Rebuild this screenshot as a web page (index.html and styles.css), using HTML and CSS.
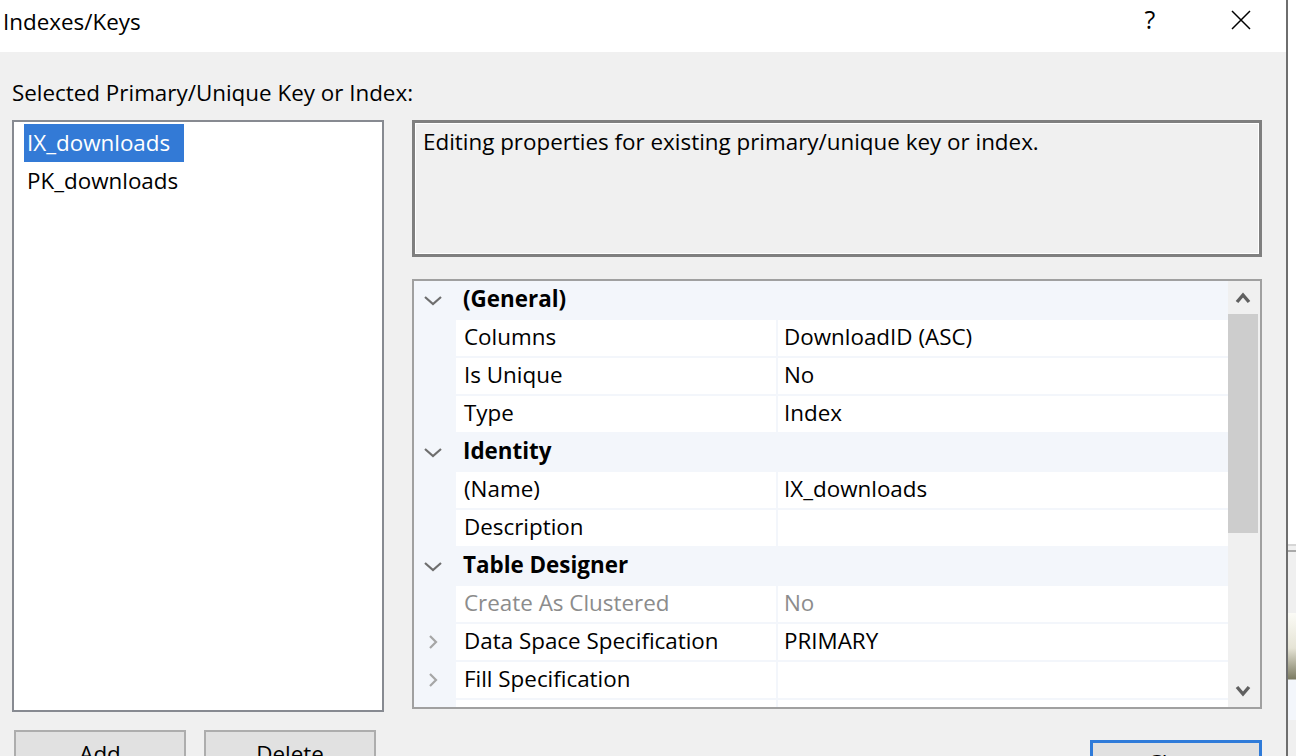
FILE: index.html
```html
<!DOCTYPE html>
<html>
<head>
<meta charset="utf-8">
<title>Indexes/Keys</title>
<link rel="stylesheet" href="styles.css">
</head>
<body>
<div class="screen">
  <div class="dialog">
    <div class="titlebar">
      <div class="title">Indexes/Keys</div>
      <div class="cap-help">?</div>
      <div class="cap-close">
        <svg width="20" height="20" viewBox="0 0 20 20"><path d="M1 1 L19 19 M19 1 L1 19" stroke="#000" stroke-width="1.5" fill="none"/></svg>
      </div>
    </div>
    <div class="content">
      <div class="label">Selected Primary/Unique Key or Index:</div>
      <div class="main">
        <div class="listbox">
          <div class="item selected"><span>IX_downloads</span></div>
          <div class="item"><span>PK_downloads</span></div>
        </div>
        <div class="right">
          <div class="desc">Editing properties for existing primary/unique key or index.</div>
          <div class="grid">
            <div class="rows">
              <div class="row cat">
                <div class="gutter"><svg width="42" height="36" viewBox="0 0 42 36"><polyline points="11,15 19,22 27,15" fill="none" stroke="#6e6e6e" stroke-width="2.2"/></svg></div>
                <div class="cat-label">(General)</div>
              </div>
              <div class="row"><div class="gutter"></div><div class="name">Columns</div><div class="value">DownloadID (ASC)</div></div>
              <div class="row"><div class="gutter"></div><div class="name">Is Unique</div><div class="value">No</div></div>
              <div class="row"><div class="gutter"></div><div class="name">Type</div><div class="value">Index</div></div>
              <div class="row cat">
                <div class="gutter"><svg width="42" height="36" viewBox="0 0 42 36"><polyline points="11,15 19,22 27,15" fill="none" stroke="#6e6e6e" stroke-width="2.2"/></svg></div>
                <div class="cat-label">Identity</div>
              </div>
              <div class="row"><div class="gutter"></div><div class="name">(Name)</div><div class="value">IX_downloads</div></div>
              <div class="row"><div class="gutter"></div><div class="name">Description</div><div class="value"></div></div>
              <div class="row cat">
                <div class="gutter"><svg width="42" height="36" viewBox="0 0 42 36"><polyline points="11,15 19,22 27,15" fill="none" stroke="#6e6e6e" stroke-width="2.2"/></svg></div>
                <div class="cat-label">Table Designer</div>
              </div>
              <div class="row disabled"><div class="gutter"></div><div class="name">Create As Clustered</div><div class="value">No</div></div>
              <div class="row">
                <div class="gutter"><svg width="42" height="36" viewBox="0 0 42 36"><polyline points="16,12 22,18 16,24" fill="none" stroke="#a6a6a6" stroke-width="2.2"/></svg></div>
                <div class="name">Data Space Specification</div><div class="value">PRIMARY</div>
              </div>
              <div class="row">
                <div class="gutter"><svg width="42" height="36" viewBox="0 0 42 36"><polyline points="16,12 22,18 16,24" fill="none" stroke="#a6a6a6" stroke-width="2.2"/></svg></div>
                <div class="name">Fill Specification</div><div class="value"></div>
              </div>
              <div class="row"><div class="gutter"></div><div class="name"></div><div class="value"></div></div>
            </div>
            <div class="scrollbar">
              <div class="sb-btn"><svg width="30" height="33" viewBox="0 0 30 33"><polyline points="9,21 15,14 21,21" fill="none" stroke="#606060" stroke-width="3.4"/></svg></div>
              <div class="sb-track"><div class="sb-thumb"></div></div>
              <div class="sb-btn"><svg width="30" height="33" viewBox="0 0 30 33"><polyline points="9,13 15,20 21,13" fill="none" stroke="#606060" stroke-width="3.4"/></svg></div>
            </div>
          </div>
        </div>
      </div>
      <div class="buttons">
        <button class="btn add">Add</button>
        <button class="btn delete">Delete</button>
        <button class="btn close">Close</button>
      </div>
    </div>
  </div>
  <div class="outside"></div>
</div>
</body>
</html>
```

FILE: styles.css
```css
html, body {
  margin: 0;
  padding: 0;
}
body {
  width: 1296px;
  height: 756px;
  overflow: hidden;
  background: #f0f0f0;
  font-family: "Open Sans", "Noto Sans", sans-serif;
  font-size: 22.4px;
  color: #000;
}
.screen {
  display: flex;
  height: 756px;
}
.dialog {
  width: 1286px;
  flex-shrink: 0;
  border-right: 2px solid #6e6e6e;
  display: flex;
  flex-direction: column;
  background: #f0f0f0;
  overflow: hidden;
}
.outside {
  flex: 1;
  background: linear-gradient(to bottom,
    #ffffff 0, #ffffff 544px,
    #d6d6d6 544px, #d6d6d6 546px,
    #f0f0f0 546px, #f0f0f0 550px,
    #a9a9a9 550px, #a9a9a9 552px,
    #f0f0f0 552px, #f0f0f0 613px,
    #fbfbf6 613px, #e6e4d6 648px, #7c7b62 679px,
    #f3f6fb 680px, #f3f6fb 720px,
    #f0f0f0 720px, #f0f0f0 756px);
}
.titlebar {
  height: 52px;
  flex-shrink: 0;
  background: #fff;
  display: flex;
}
.title {
  flex: 1;
  padding: 7px 0 0 3px;
  line-height: 30px;
}
.cap-help {
  width: 92px;
  text-align: center;
  font-size: 25px;
  line-height: 30px;
  padding-top: 4px;
}
.cap-close {
  width: 90px;
  display: flex;
  justify-content: center;
  align-items: flex-start;
  padding-top: 10px;
}
.content {
  flex: 1;
  padding: 26px 24px 0 12px;
  display: flex;
  flex-direction: column;
}
.label {
  line-height: 30px;
}
.main {
  display: flex;
  gap: 28px;
  margin-top: 12px;
  align-items: flex-start;
}
.listbox {
  width: 372px;
  height: 592px;
  box-sizing: border-box;
  border: 2px solid #878a91;
  background: #fff;
  padding: 2px 0 0 10px;
}
.item {
  height: 38px;
  line-height: 37px;
}
.item span {
  display: inline-block;
  height: 38px;
  padding: 0 14px 0 3px;
}
.item.selected span {
  background: #337ad6;
  color: #fff;
}
.right {
  width: 850px;
  display: flex;
  flex-direction: column;
}
.desc {
  height: 137px;
  box-sizing: border-box;
  border: 3px solid #7f7f7f;
  box-shadow: inset 0 0 0 1px #fff;
  padding: 4px 0 0 8px;
  line-height: 30px;
}
.grid {
  margin-top: 22px;
  height: 430px;
  box-sizing: border-box;
  border: 2px solid #a0a0a0;
  background: #f3f6fb;
  display: flex;
}
.rows {
  flex: 1;
  display: flex;
  flex-direction: column;
  gap: 2px;
  padding-top: 1px;
  overflow: hidden;
}
.row {
  display: flex;
  height: 36px;
  flex-shrink: 0;
  line-height: 34px;
  white-space: nowrap;
}
.gutter {
  width: 42px;
  height: 36px;
  flex-shrink: 0;
}
.gutter svg {
  display: block;
}
.name {
  width: 320px;
  flex-shrink: 0;
  box-sizing: border-box;
  background: #fff;
  padding-left: 8px;
}
.value {
  flex: 1;
  background: #fff;
  border-left: 2px solid #f3f6fb;
  padding-left: 6px;
}
.cat-label {
  font-weight: 700;
  padding-left: 7px;
}
.row.disabled {
  color: #8c8c8c;
}
.scrollbar {
  width: 32px;
  flex-shrink: 0;
  background: #f0f0f0;
  display: flex;
  flex-direction: column;
}
.sb-btn {
  height: 33px;
  flex-shrink: 0;
}
.sb-btn svg {
  display: block;
}
.sb-track {
  flex: 1;
}
.sb-thumb {
  width: 30px;
  height: 219px;
  background: #cdcdcd;
}
.buttons {
  display: flex;
  align-items: flex-start;
  margin-top: 18px;
}
.btn {
  width: 172px;
  height: 46px;
  box-sizing: border-box;
  border: 2px solid #adadad;
  background: #e1e1e1;
  font-family: inherit;
  font-size: inherit;
  color: #000;
  text-align: center;
  padding: 1px 0 0 0;
  line-height: 30px;
  margin: 0;
  display: block;
}
.btn.add {
  margin-left: 2px;
}
.btn.delete {
  margin-left: 18px;
}
.btn.close {
  margin-left: auto;
  margin-top: 10px;
  border: 3px solid #2f7bd9;
  padding-top: 0;
  line-height: 26px;
}
```
